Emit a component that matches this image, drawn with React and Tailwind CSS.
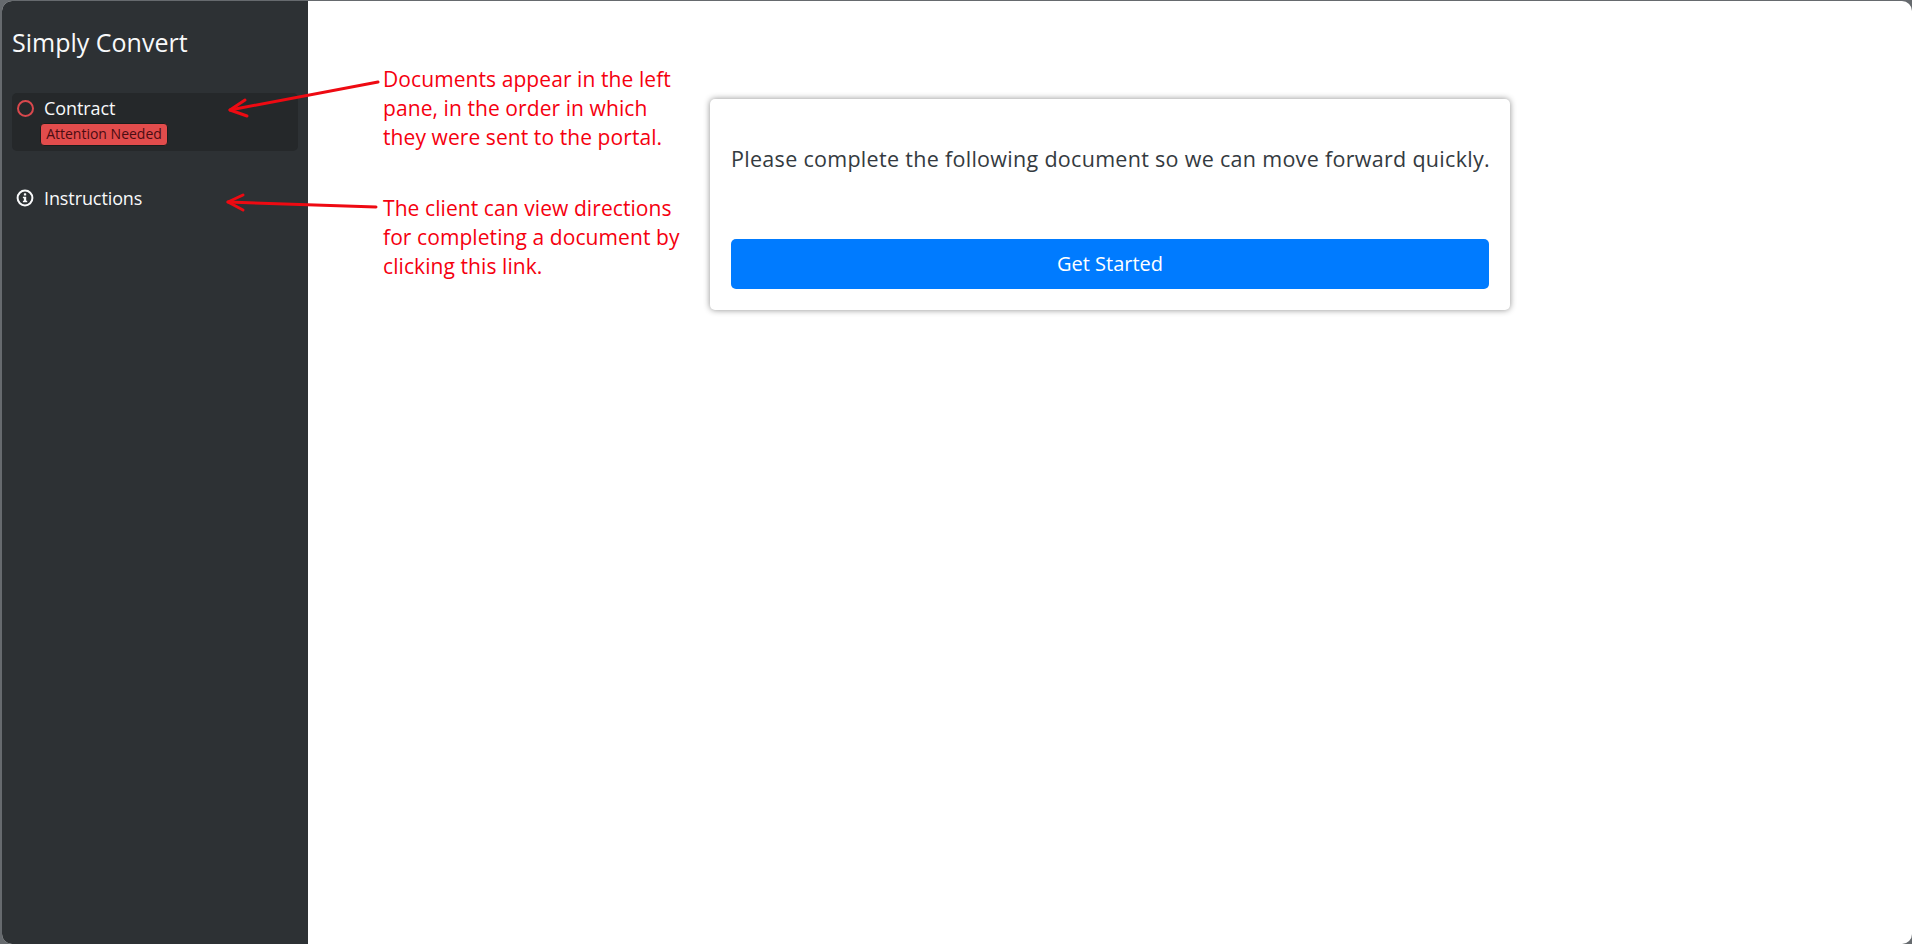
const font = { fontFamily: '"Open Sans", "Noto Sans", sans-serif' };

function Note({ className, lines }) {
	return (
		<div className={`absolute text-[21px] leading-[29px] tracking-[0.08px] text-[#f5000f] whitespace-nowrap ${className}`}>
			{lines.map((line) => (
				<div key={line}>{line}</div>
			))}
		</div>
	);
}

function Arrow({ tail, tip, barbs }) {
	return (
		<g fill="none" stroke="#ee0a12" strokeWidth="3" strokeLinecap="round" strokeLinejoin="round">
			<path d={`M${tail[0]} ${tail[1]} L${tip[0]} ${tip[1]}`} />
			<path d={`M${barbs[0][0]} ${barbs[0][1]} L${tip[0]} ${tip[1]} L${barbs[1][0]} ${barbs[1][1]}`} />
		</g>
	);
}

function InfoIcon() {
	return (
		<svg width="18" height="18" viewBox="0 0 18 18" fill="none">
			<circle cx="9" cy="9" r="7.4" stroke="#f8f9fa" strokeWidth="2" />
			<rect x="7.9" y="4.3" width="2.3" height="2.3" rx="0.4" fill="#f8f9fa" />
			<path d="M6.9 7.7h3.3v4h1v1.5H6.9v-1.5h1v-2.5h-1z" fill="#f8f9fa" />
		</svg>
	);
}

export default function App() {
	return (
		<div className="relative h-[944px] w-[1912px] overflow-hidden bg-[#666a6e] pl-[2px] pt-[1px]" style={font}>
			<div className="flex h-full overflow-hidden rounded-[10px] bg-white">
				<aside className="flex w-[306px] shrink-0 flex-col bg-[#2d3134] px-[10px] text-white">
					<h1 className="mt-[25px] text-[25px] font-normal leading-[32px] text-[#f8f9fa]">Simply Convert</h1>
					<div className="mt-[35px] h-[58px] rounded-[5px] bg-[#25282a] pl-[5px] pt-[2px]">
						<div className="flex items-center">
							<span className="h-[17px] w-[17px] rounded-full border-2 border-[#d9484d]" />
							<span className="ml-[10px] text-[18px] leading-[26px] tracking-[-0.1px] text-[#f8f9fa]">Contract</span>
						</div>
						<span className="ml-[23px] mt-[2px] block h-[23px] w-[128px] rounded-[4px] border border-[#1c1c1c] bg-[#e24c4c] text-center text-[14px] leading-[20px] text-[#4a0d12]">
							Attention Needed
						</span>
					</div>
					<div className="mt-[34px] flex items-center pl-[4px]">
						<InfoIcon />
						<span className="ml-[10px] text-[18px] leading-[26px] tracking-[-0.1px] text-[#f8f9fa]">Instructions</span>
					</div>
				</aside>
				<main className="flex-1 pl-[402px] pt-[98px]">
					<div className="h-[211px] w-[800px] rounded-[5px] bg-white px-[21px] pt-[44px] shadow-[0_0_6px_rgba(0,0,0,0.45)]">
						<p className="whitespace-nowrap text-[21.5px] leading-[32px] tracking-[0.3px] text-[#343a40]">
							Please complete the following document so we can move forward quickly.
						</p>
						<button className="mt-[64px] h-[50px] w-full rounded-[5px] bg-[#007bff] text-[20px] text-white">
							Get Started
						</button>
					</div>
				</main>
			</div>

			<Note className="left-[383px] top-[65px]" lines={["Documents appear in the left", "pane, in the order in which", "they were sent to the portal."]} />
			<Note className="left-[383px] top-[194px]" lines={["The client can view directions", "for completing a document by", "clicking this link."]} />

			<svg className="absolute left-0 top-0" width="1912" height="944">
				<Arrow tail={[378, 82]} tip={[230, 110]} barbs={[[245, 100], [247, 116]]} />
				<Arrow tail={[376, 207]} tip={[228, 202]} barbs={[[243, 195], [243, 210]]} />
			</svg>
		</div>
	);
}
